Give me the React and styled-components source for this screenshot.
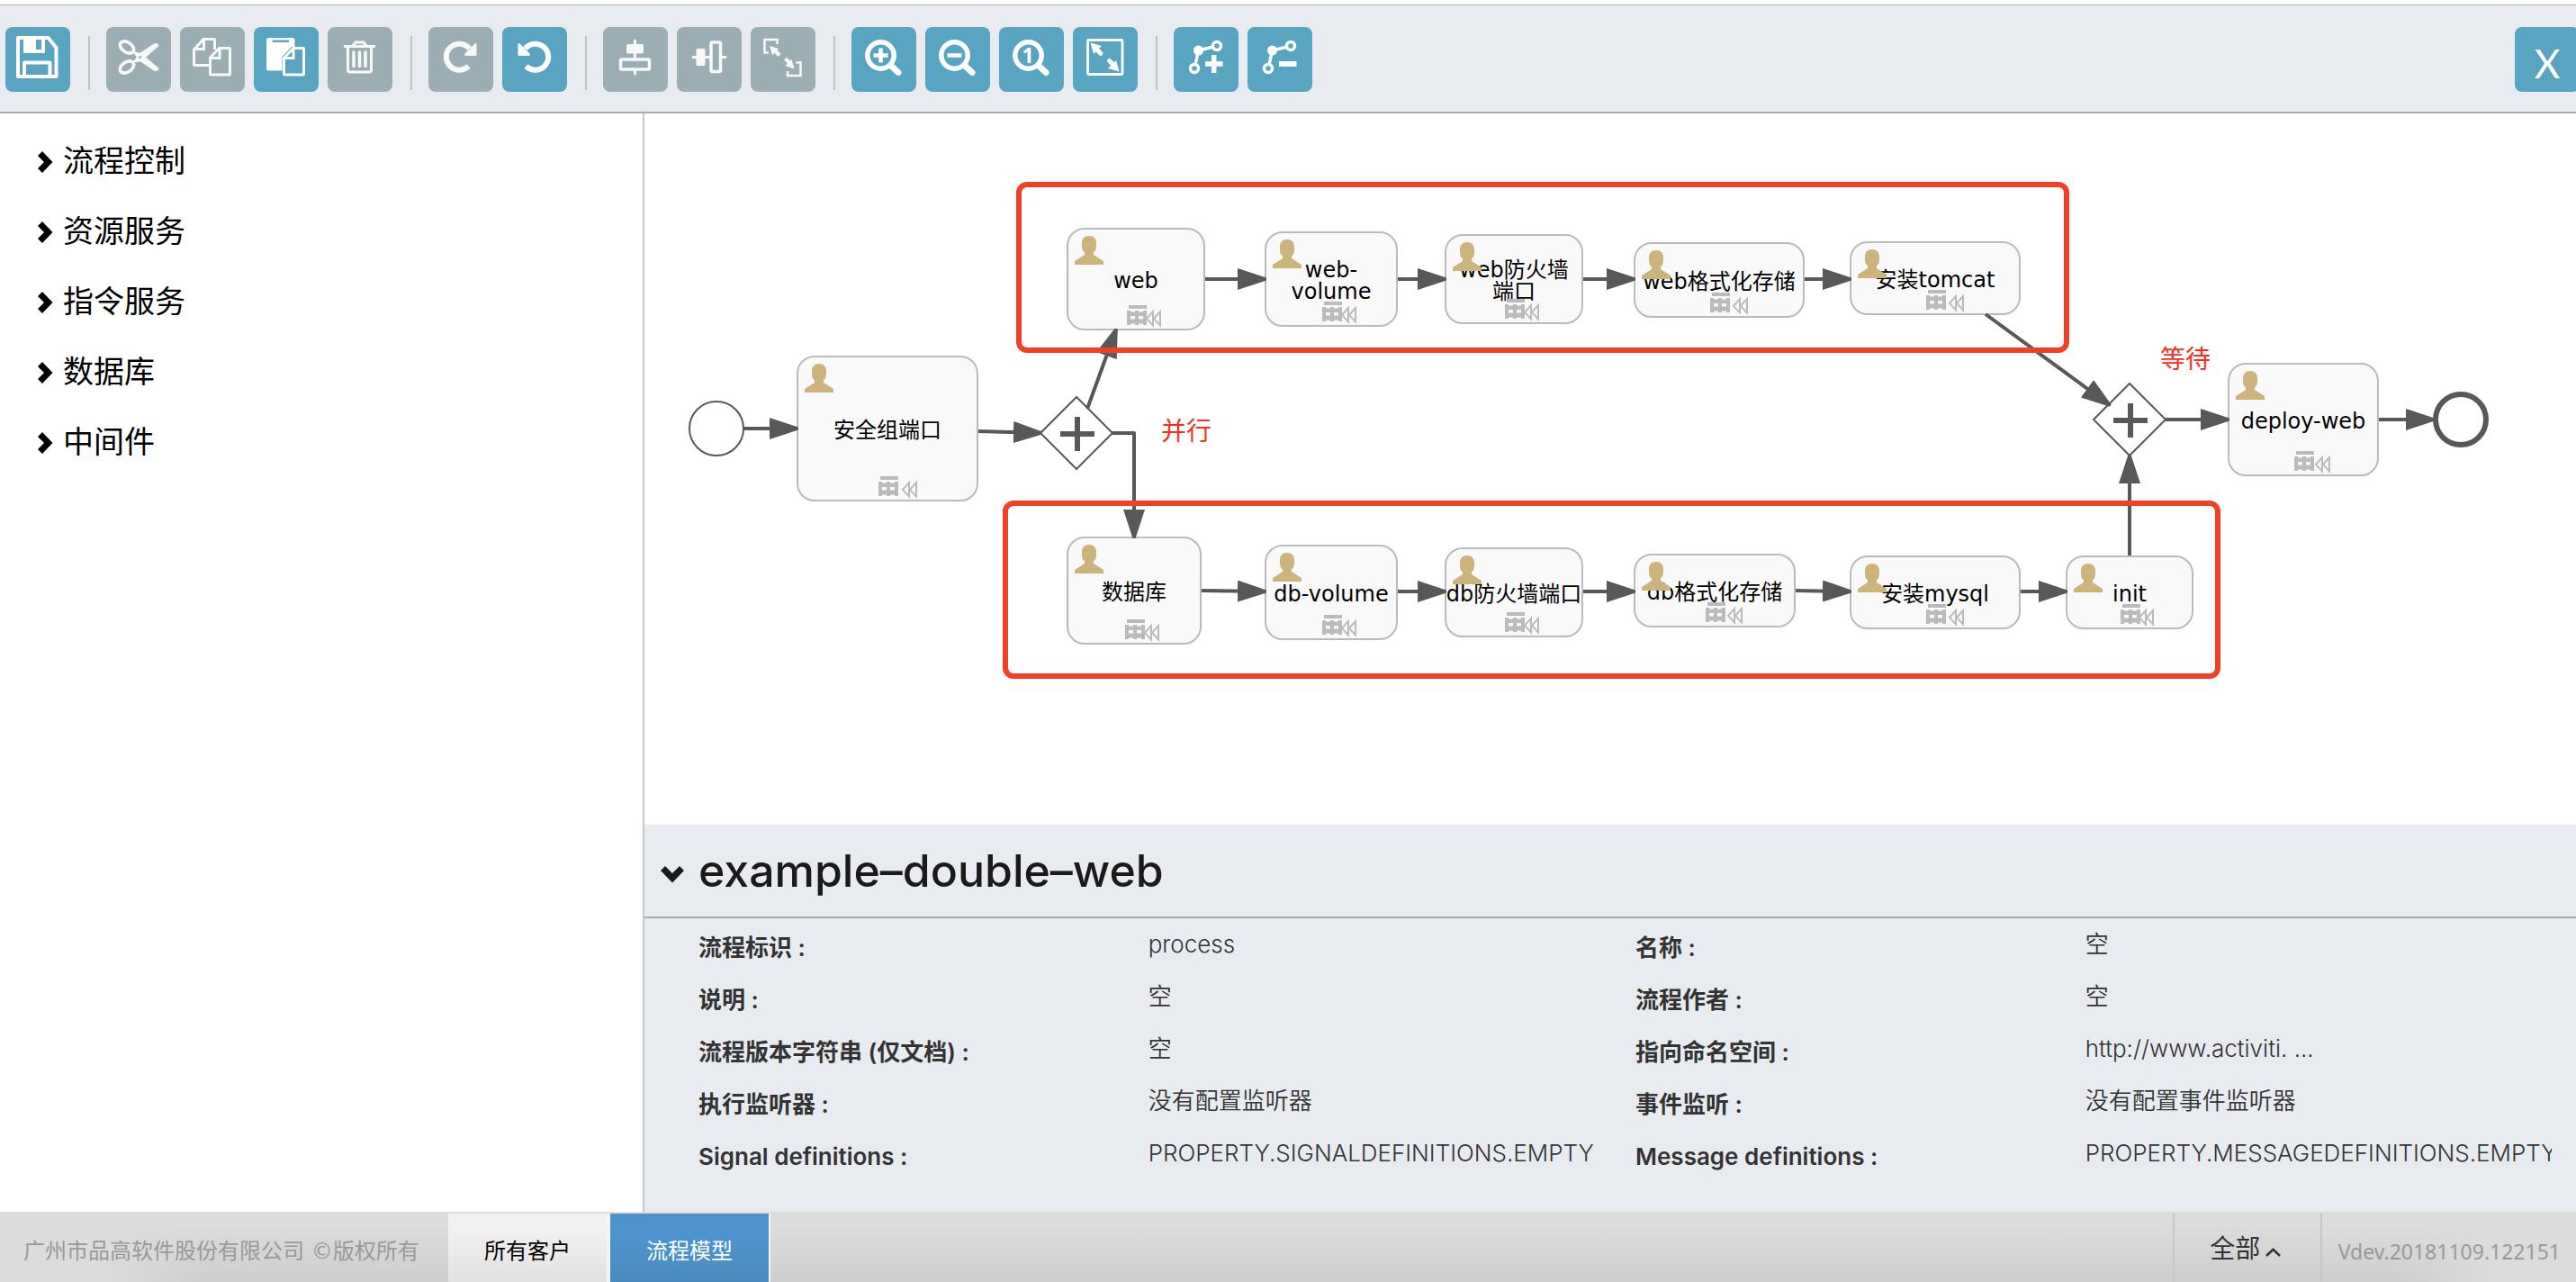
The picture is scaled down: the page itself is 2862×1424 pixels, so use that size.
import React from "react";
import styled, { createGlobalStyle } from "styled-components";

const uiFont = `Inter, "Noto Sans CJK SC", sans-serif`;
const diagramFont = `"DejaVu Sans", "Noto Sans CJK SC", sans-serif`;

const GlobalStyle = createGlobalStyle`
  *, *::before, *::after { box-sizing: border-box; }
  body { margin: 0; background: #fff; font-family: ${uiFont}; color: #000; }
  button { font: inherit; color: inherit; border: 0; padding: 0; background: none; cursor: pointer; }
  ul, dl, dd, h1 { margin: 0; padding: 0; }
`;

const Page = styled.div`
  display: flex;
  flex-direction: column;
  min-height: 100vh;
  padding-top: 5px;
  overflow: hidden;
`;

/* ---------- toolbar ---------- */

const Toolbar = styled.header`
  display: flex;
  align-items: flex-start;
  padding: 24px 0 22px 6px;
  background: #e8ebf0;
  border-top: 1px solid #aab1b9;
  border-bottom: 2px solid #a2acb5;
`;

const ToolGroup = styled.div`
  display: flex;
  gap: 10px;
`;

const Separator = styled.span`
  width: 2px;
  height: 60px;
  margin: 10px 18px 0 20px;
  background: #bfc4cc;
`;

const ToolButton = styled.button`
  flex: none;
  width: 72px;
  height: 72px;
  border-radius: 8px;
  color: #fff;
  background: ${(p) => (p.disabled ? "#9aaeb4" : "#58a4c1")};

  svg {
    display: block;
    width: 72px;
    height: 72px;
    opacity: ${(p) => (p.disabled ? 0.93 : 1)};
  }
`;

const CloseButton = styled(ToolButton)`
  margin: 0 -4px 0 auto;
  padding-top: 8px;
  font-family: Lato, sans-serif;
  font-size: 44px;
  line-height: 64px;
`;

const Glyph = ({ children }) => (
  <svg viewBox="0 0 72 72" fill="none" stroke="currentColor" strokeWidth="3" aria-hidden="true">
    {children}
  </svg>
);

const SaveIcon = () => (
  <Glyph>
    <path d="M14 12H47.5L56.5 23V55H14Z" strokeWidth="4" strokeLinejoin="round" />
    <path d="M20 12H44V27.500Q44 29 42.500 29H21.500Q20 29 20 27.500ZM34 14V25H40V14Z" fill="currentColor" fillRule="evenodd" stroke="none" />
    <path d="M21 55V39.500H49.500V55" strokeWidth="4" strokeLinejoin="round" />
  </Glyph>
);

const CutIcon = () => (
  <Glyph>
    <ellipse cx="23" cy="22.500" rx="8.500" ry="5.500" transform="rotate(35 23 22.500)" strokeWidth="3.600" />
    <ellipse cx="23" cy="44.500" rx="8.500" ry="5.500" transform="rotate(-35 23 44.500)" strokeWidth="3.600" />
    <path d="M29 27L36 30L53 18.500Q57.500 16.500 58.500 21L39 38L29 40L34 33.500Z" fill="currentColor" stroke="none" />
    <path d="M29 40L36 37L53 48.500Q57.500 50.500 58.500 46L39 29L29 27L34 33.500Z" fill="currentColor" stroke="none" />
    <circle cx="37.500" cy="33.500" r="1.500" fill="#9aaeb4" stroke="none" />
  </Glyph>
);

const CopyIcon = () => (
  <Glyph>
    <path d="M32 42.500H16.500Q15.500 42.500 15.500 41.500V25L26 13.500H37.500Q38.500 13.500 38.500 14.500V25" />
    <path d="M26.500 14V24.500H16" />
    <path d="M33.500 34L43.500 23.500H54.500Q55.500 23.500 55.500 24.500V52Q55.500 53 54.500 53H34.500Q33.500 53 33.500 52Z" />
    <path d="M44 24V34.500H34" />
  </Glyph>
);

const PasteIcon = () => (
  <Glyph>
    <path d="M17 12H43Q45.500 12 45.500 14.500V22H42L31.500 33V48.500H17Q14 48.500 14 46V14.500Q14 12 17 12ZM20.500 14.500V17H39V14.500Z" fill="currentColor" fillRule="evenodd" stroke="none" />
    <path d="M33.500 34.500L44 23.500H54.500Q55.500 23.500 55.500 24.500V52Q55.500 53 54.500 53H34.500Q33.500 53 33.500 52Z" />
    <path d="M44 24V34.500H34" />
  </Glyph>
);

const TrashIcon = () => (
  <Glyph>
    <path d="M18 21.500H53" />
    <path d="M28 21L31 17H40L43 21" />
    <path d="M22.500 22V47.500Q22.500 50 25 50H46Q48.500 50 48.500 47.500V22" />
    <path d="M29 28V43.500M35.500 28V43.500M42 28V43.500" strokeWidth="3.500" strokeLinecap="round" />
  </Glyph>
);

const RedoShape = () => (
  <>
    <path d="M45.500 24A14.500 14.500 0 1 0 44.500 43.500" strokeWidth="6" />
    <path d="M53.500 19V31Q53.500 32 52.500 32H41Q39.500 31 40.500 29.500L51.500 18.500Q53 17.500 53.500 19Z" fill="currentColor" stroke="none" />
  </>
);

const RedoIcon = () => <Glyph><RedoShape /></Glyph>;
const UndoIcon = () => <Glyph><g transform="translate(71 0) scale(-1 1)"><RedoShape /></g></Glyph>;

const AlignVerticalIcon = () => (
  <Glyph>
    <path d="M35.500 15V34M35.500 48V52" strokeLinecap="round" />
    <rect x="26" y="19" width="19" height="10.500" rx="1.500" fill="currentColor" stroke="none" />
    <rect x="19.500" y="36" width="32" height="11" rx="1.500" strokeWidth="3.500" />
  </Glyph>
);

const AlignHorizontalIcon = () => (
  <Glyph>
    <path d="M18 33.500H38M50 33.500H54" strokeLinecap="round" />
    <rect x="21.500" y="24" width="10" height="19" rx="1.500" fill="currentColor" stroke="none" />
    <rect x="38" y="17" width="10.500" height="32.500" rx="1.500" strokeWidth="3.500" />
  </Glyph>
);

const SameSizeIcon = () => (
  <Glyph>
    <path d="M20 28.500H15.500V14H29.500V19" strokeWidth="2.500" />
    <path d="M50.500 39.500H55.500V54H41V49" strokeWidth="2.500" />
    <path d="M32 31.500L26 25.500M38.500 35L44 40.500" strokeWidth="4.500" />
    <path d="M21 21L31 24L24 31.500Z M48.500 46.500L38.500 43L45.500 36Z" fill="currentColor" stroke="none" />
  </Glyph>
);

const Lens = ({ children }) => (
  <Glyph>
    <circle cx="32.500" cy="31.500" r="14.700" strokeWidth="5.500" />
    <path d="M44 43L52 50.500" strokeWidth="7" strokeLinecap="round" />
    {children}
  </Glyph>
);

const ZoomInIcon = () => <Lens><path d="M24.500 31.500H40.500M32.500 23.500V39.500" strokeWidth="4.500" /></Lens>;
const ZoomOutIcon = () => <Lens><path d="M24.500 31.500H40.500" strokeWidth="4.500" /></Lens>;

const LensDigit = styled.text`
  font: 700 23px "Noto Sans", sans-serif;
  fill: #fff;
  stroke: none;
  text-anchor: middle;
`;
const ZoomActualIcon = () => <Lens><LensDigit x="32" y="40">1</LensDigit></Lens>;

const ZoomFitIcon = () => (
  <Glyph>
    <rect x="16.500" y="14.500" width="38.500" height="38" rx="1" strokeWidth="2.800" />
    <path d="M31 29.500L25 23.500M40.500 37.500L46 43" strokeWidth="5" strokeLinecap="round" />
    <path d="M19.500 17.500L32 21L23 30Z M51.500 49.500L39 46L48 37Z" fill="currentColor" stroke="none" />
  </Glyph>
);

const Bend = ({ children }) => (
  <Glyph>
    <path d="M24 42L27.500 26L44 22" strokeWidth="3.500" />
    <circle cx="48" cy="21" r="4.500" strokeWidth="3.500" />
    <circle cx="27.500" cy="26" r="5.500" fill="currentColor" stroke="none" />
    <circle cx="23" cy="46" r="4.500" strokeWidth="3.500" />
    {children}
  </Glyph>
);

const BendAddIcon = () => <Bend><path d="M35 41H54.500M44.700 31V51" strokeWidth="5.500" /></Bend>;
const BendRemoveIcon = () => <Bend><path d="M35 41H54.500" strokeWidth="6" /></Bend>;

const toolGroups = [
  [{ label: "保存", icon: SaveIcon }],
  [
    { label: "剪切", icon: CutIcon, disabled: true },
    { label: "复制", icon: CopyIcon, disabled: true },
    { label: "粘贴", icon: PasteIcon },
    { label: "删除", icon: TrashIcon, disabled: true },
  ],
  [
    { label: "重做", icon: RedoIcon, disabled: true },
    { label: "撤销", icon: UndoIcon },
  ],
  [
    { label: "垂直对齐", icon: AlignVerticalIcon, disabled: true },
    { label: "水平对齐", icon: AlignHorizontalIcon, disabled: true },
    { label: "相同大小", icon: SameSizeIcon, disabled: true },
  ],
  [
    { label: "放大", icon: ZoomInIcon },
    { label: "缩小", icon: ZoomOutIcon },
    { label: "实际大小", icon: ZoomActualIcon },
    { label: "适应窗口", icon: ZoomFitIcon },
  ],
  [
    { label: "添加拐点", icon: BendAddIcon },
    { label: "删除拐点", icon: BendRemoveIcon },
  ],
];

/* ---------- body ---------- */

const Body = styled.div`
  display: flex;
  flex: 1;
`;

const Sidebar = styled.nav`
  flex: 0 0 716px;
  padding-top: 11px;
  border-right: 2px solid #c8c9cb;
`;

const StencilList = styled.ul`
  list-style: none;
`;

const StencilGroup = styled.button`
  display: flex;
  align-items: center;
  gap: 11px;
  width: 100%;
  height: 78px;
  padding-left: 42px;
  font-size: 34px;
  text-align: left;

  svg {
    width: 17px;
    height: 26px;
    margin-top: 8px;
  }
`;

const Workspace = styled.main`
  display: flex;
  flex: 1;
  flex-direction: column;
  min-width: 0;
`;

const Canvas = styled.section`
  position: relative;
  flex: 1;
  min-height: 640px;
  overflow: hidden;
  font-family: ${diagramFont};
`;

const TaskNode = styled.div`
  position: absolute;
  left: ${(p) => p.$x}px;
  top: ${(p) => p.$y}px;
  width: ${(p) => p.$w}px;
  height: ${(p) => p.$h}px;
  display: flex;
  align-items: center;
  justify-content: center;
  padding-top: 4px;
  background: #f9f9f9;
  border: 2px solid #bbb;
  border-radius: 20px;
  font-size: 24px;
  line-height: 24px;
  text-align: center;
  white-space: pre;
`;

const UserIcon = styled.svg`
  position: absolute;
  left: 7px;
  top: 7px;
  width: 32px;
  height: 32px;
  fill: #cdb37c;
`;

const Marker = styled.svg`
  position: absolute;
  left: calc(50% - 10px);
  bottom: 0;
  width: 48px;
  height: 26px;
`;

const Edges = styled.svg`
  position: absolute;
  left: 0;
  top: 0;
  width: 100%;
  height: 100%;
  pointer-events: none;
`;

const Highlight = styled.div`
  position: absolute;
  left: ${(p) => p.$x}px;
  top: ${(p) => p.$y}px;
  width: ${(p) => p.$w}px;
  height: ${(p) => p.$h}px;
  border: 6px solid #f04026;
  border-radius: 12px;
  pointer-events: none;
`;

const Note = styled.span`
  position: absolute;
  left: ${(p) => p.$x}px;
  top: ${(p) => p.$y}px;
  color: #f5301f;
  font-size: 28px;
  line-height: 36px;
`;

const tasks = [
  { x: 169, y: 269, w: 202, h: 162, name: "安全组端口" },
  { x: 469, y: 127, w: 154, h: 114, name: "web" },
  { x: 689, y: 131, w: 148, h: 106, name: "web-\nvolume" },
  { x: 889, y: 134, w: 154, h: 100, name: "web防火墙\n端口" },
  { x: 1099, y: 143, w: 190, h: 84, name: "web格式化存储" },
  { x: 1339, y: 142, w: 190, h: 82, name: "安装tomcat" },
  { x: 1759, y: 277, w: 168, h: 126, name: "deploy-web" },
  { x: 469, y: 470, w: 150, h: 120, name: "数据库" },
  { x: 689, y: 479, w: 148, h: 106, name: "db-volume" },
  { x: 889, y: 482, w: 154, h: 100, name: "db防火墙端口" },
  { x: 1099, y: 489, w: 180, h: 82, name: "db格式化存储" },
  { x: 1339, y: 491, w: 190, h: 82, name: "安装mysql" },
  { x: 1579, y: 491, w: 142, h: 82, name: "init" },
];

const flows = [
  "110,350 170,350",
  "371,353 441,355",
  "492,328 524,240",
  "520,355 544,355 544,471",
  "623,184 690,184",
  "837,184 890,184",
  "1043,184 1100,184",
  "1289,184 1340,184",
  "1490,223 1628,324",
  "1690,340 1760,340",
  "1927,340 1988,340",
  "619,530 690,531",
  "837,531 890,531",
  "1043,531 1100,531",
  "1279,530 1340,531",
  "1529,531 1580,531",
  "1650,491 1650,380",
];

const gateways = [
  { x: 480, y: 355 },
  { x: 1650, y: 340 },
];

function Task({ x, y, w, h, name }) {
  const left = Math.round(w * 0.1 + 5);
  return (
    <TaskNode $x={x} $y={y} $w={w} $h={h}>
      {name}
      <UserIcon viewBox="0 0 32 32" aria-hidden="true">
        <path d="M16 0C21 0 24 3 24 8C24 13 24 17 21 18V21L32 28V32H0V28L11 21V18C8 17 8 13 8 8C8 3 11 0 16 0Z" />
      </UserIcon>
      <Marker viewBox="0 0 48 26" aria-hidden="true">
        <path d="M2 0H22V4H2ZM0 6H4V7.500H9V6H13V7.500H18V6H22V22H18V20.500H13V22H9V20.500H4V22H0ZM4 12V15.500H9V12ZM13 12V15.500H18V12Z" fill="#bbb" fillRule="evenodd" />
        <path
          d={`M${left + 9} 7V22.500L${left + 2} 14.800ZM${left + 17} 7V22.500L${left + 10} 14.800Z`}
          fill="none"
          stroke="#bbb"
          strokeWidth="2"
        />
      </Marker>
    </TaskNode>
  );
}

function Diagram() {
  return (
    <Canvas aria-label="流程图">
      {tasks.map((t) => (
        <Task key={t.name} {...t} />
      ))}
      <Edges aria-hidden="true">
        <defs>
          <marker id="arrow" markerUnits="userSpaceOnUse" markerWidth="32" markerHeight="24" refX="31" refY="12" orient="auto">
            <path d="M0 0L32 10.500V13.500L0 24Z" fill="#585858" />
          </marker>
        </defs>
        <circle cx="80" cy="350" r="30" fill="#fff" stroke="#585858" strokeWidth="2" />
        <circle cx="2018" cy="340" r="28" fill="#fff" stroke="#585858" strokeWidth="6" />
        {gateways.map(({ x, y }) => (
          <g key={x} stroke="#585858">
            <path d={`M${x - 40} ${y}L${x} ${y - 40}L${x + 40} ${y}L${x} ${y + 40}Z`} fill="#fff" strokeWidth="2" />
            <path d={`M${x - 18} ${y + 1}H${x + 20}M${x + 1} ${y - 18}V${y + 20}`} strokeWidth="6" />
          </g>
        ))}
        {flows.map((points) => (
          <polyline
            key={points}
            points={points}
            fill="none"
            stroke="#585858"
            strokeWidth="4"
            strokeLinejoin="round"
            markerEnd="url(#arrow)"
          />
        ))}
      </Edges>
      <Highlight $x={413} $y={76} $w={1170} $h={190} />
      <Highlight $x={398} $y={430} $w={1353} $h={198} />
      <Note $x={574} $y={336}>并行</Note>
      <Note $x={1684} $y={256}>等待</Note>
    </Canvas>
  );
}

/* ---------- properties ---------- */

const Properties = styled.section`
  background: #e8ebf0;
`;

const PropertiesHeader = styled.button`
  display: flex;
  align-items: center;
  gap: 16px;
  width: 100%;
  height: 104px;
  padding-left: 18px;
  border-bottom: 2px solid #a2acb5;
  color: #1a1a1a;

  svg {
    width: 26px;
    height: 20px;
    margin-top: 8px;
  }
`;

const Title = styled.h1`
  font-size: 50px;
  font-weight: 500;
  line-height: 60px;
`;

const Fields = styled.dl`
  display: grid;
  grid-template-columns: repeat(2, minmax(0, 12fr) minmax(0, 13fr));
  grid-auto-rows: 58px;
  padding: 4px 4px 32px 60px;
  font-size: 26px;
  line-height: 36px;
  color: #333;
`;

const FieldLabel = styled.dt`
  padding-top: 11px;
  font-weight: 600;
`;

const FieldValue = styled.dd`
  padding-top: 7px;
  margin-right: 23px;
  overflow: hidden;
  white-space: nowrap;
  font-weight: 350;
`;

const fields = [
  ["流程标识", "process"],
  ["名称", "空"],
  ["说明", "空"],
  ["流程作者", "空"],
  ["流程版本字符串 (仅文档)", "空"],
  ["指向命名空间", "http://www.activiti. ..."],
  ["执行监听器", "没有配置监听器"],
  ["事件监听", "没有配置事件监听器"],
  ["Signal definitions", "PROPERTY.SIGNALDEFINITIONS.EMPTY"],
  ["Message definitions", "PROPERTY.MESSAGEDEFINITIONS.EMPTY"],
];

/* ---------- footer ---------- */

const Footer = styled.footer`
  display: flex;
  height: 78px;
  padding-top: 2px;
  background:
    linear-gradient(to right, #dcdcdc 4%, rgba(220, 220, 220, 0) 8%, rgba(220, 220, 220, 0) 93%, #dcdcdc 97%),
    linear-gradient(#dcdcdc 20%, #cdcdcd);
  font-family: ${diagramFont};
  font-size: 24px;
  line-height: 76px;
  white-space: nowrap;
`;

const Copyright = styled.p`
  width: 498px;
  margin: 0;
  padding-left: 26px;
  padding-top: 4px;
  color: #999;
`;

const Tab = styled.button`
  width: ${(p) => (p.$active ? "178px" : "180px")};
  padding-top: 4px;
  border-right: ${(p) => (p.$active ? "2px" : "4px")} solid #f4f4f4;
  color: ${(p) => (p.$active ? "#fff" : "#000")};
  background: ${(p) =>
    p.$active ? "linear-gradient(#4e93cc 40%, #4a8abf)" : "linear-gradient(#f1f1f1 20%, #e2e2e2)"};
`;

const RegionMenu = styled.button`
  display: flex;
  align-items: center;
  justify-content: center;
  gap: 6px;
  width: 166px;
  margin-left: auto;
  padding: 4px 4px 0 0;
  border: solid #c6c6c6;
  border-width: 0 2px;
  font-size: 28px;
  color: #333;

  svg {
    width: 17px;
    height: 10px;
    margin-top: 6px;
  }
`;

const Version = styled.span`
  padding: 4px 17px 0 18px;
  font-family: "Noto Sans", sans-serif;
  font-size: 23px;
  color: #999;
`;

export default function App() {
  return (
    <Page>
      <GlobalStyle />
      <Toolbar>
        {toolGroups.map((group, i) => (
          <React.Fragment key={group[0].label}>
            {i > 0 && <Separator />}
            <ToolGroup>
              {group.map(({ label, icon: Icon, disabled }) => (
                <ToolButton key={label} type="button" aria-label={label} disabled={disabled}>
                  <Icon />
                </ToolButton>
              ))}
            </ToolGroup>
          </React.Fragment>
        ))}
        <CloseButton type="button">X</CloseButton>
      </Toolbar>

      <Body>
        <Sidebar>
          <StencilList>
            {["流程控制", "资源服务", "指令服务", "数据库", "中间件"].map((name) => (
              <li key={name}>
                <StencilGroup type="button">
                  <svg viewBox="0 0 17 26" aria-hidden="true">
                    <path d="M5 1L16.500 13L5 25L0 20L7 13L0 6Z" />
                  </svg>
                  {name}
                </StencilGroup>
              </li>
            ))}
          </StencilList>
        </Sidebar>

        <Workspace>
          <Diagram />
          <Properties>
            <PropertiesHeader type="button" aria-expanded="true">
              <svg viewBox="0 0 26 20" fill="currentColor" aria-hidden="true">
                <path d="M5 1L13 9L21 1L26 6L13 19.500L0 6Z" />
              </svg>
              <Title>example–double–web</Title>
            </PropertiesHeader>
            <Fields>
              {fields.map(([label, value]) => (
                <React.Fragment key={label}>
                  <FieldLabel>{label} :</FieldLabel>
                  <FieldValue>{value}</FieldValue>
                </React.Fragment>
              ))}
            </Fields>
          </Properties>
        </Workspace>
      </Body>

      <Footer>
        <Copyright>广州市品高软件股份有限公司 ©版权所有</Copyright>
        <Tab type="button">所有客户</Tab>
        <Tab type="button" $active>流程模型</Tab>
        <RegionMenu type="button">
          全部
          <svg viewBox="0 0 17 10" fill="none" stroke="currentColor" strokeWidth="2.500" aria-hidden="true">
            <path d="M1 9L8.500 1.800L16 9" />
          </svg>
        </RegionMenu>
        <Version>Vdev.20181109.122151</Version>
      </Footer>
    </Page>
  );
}
